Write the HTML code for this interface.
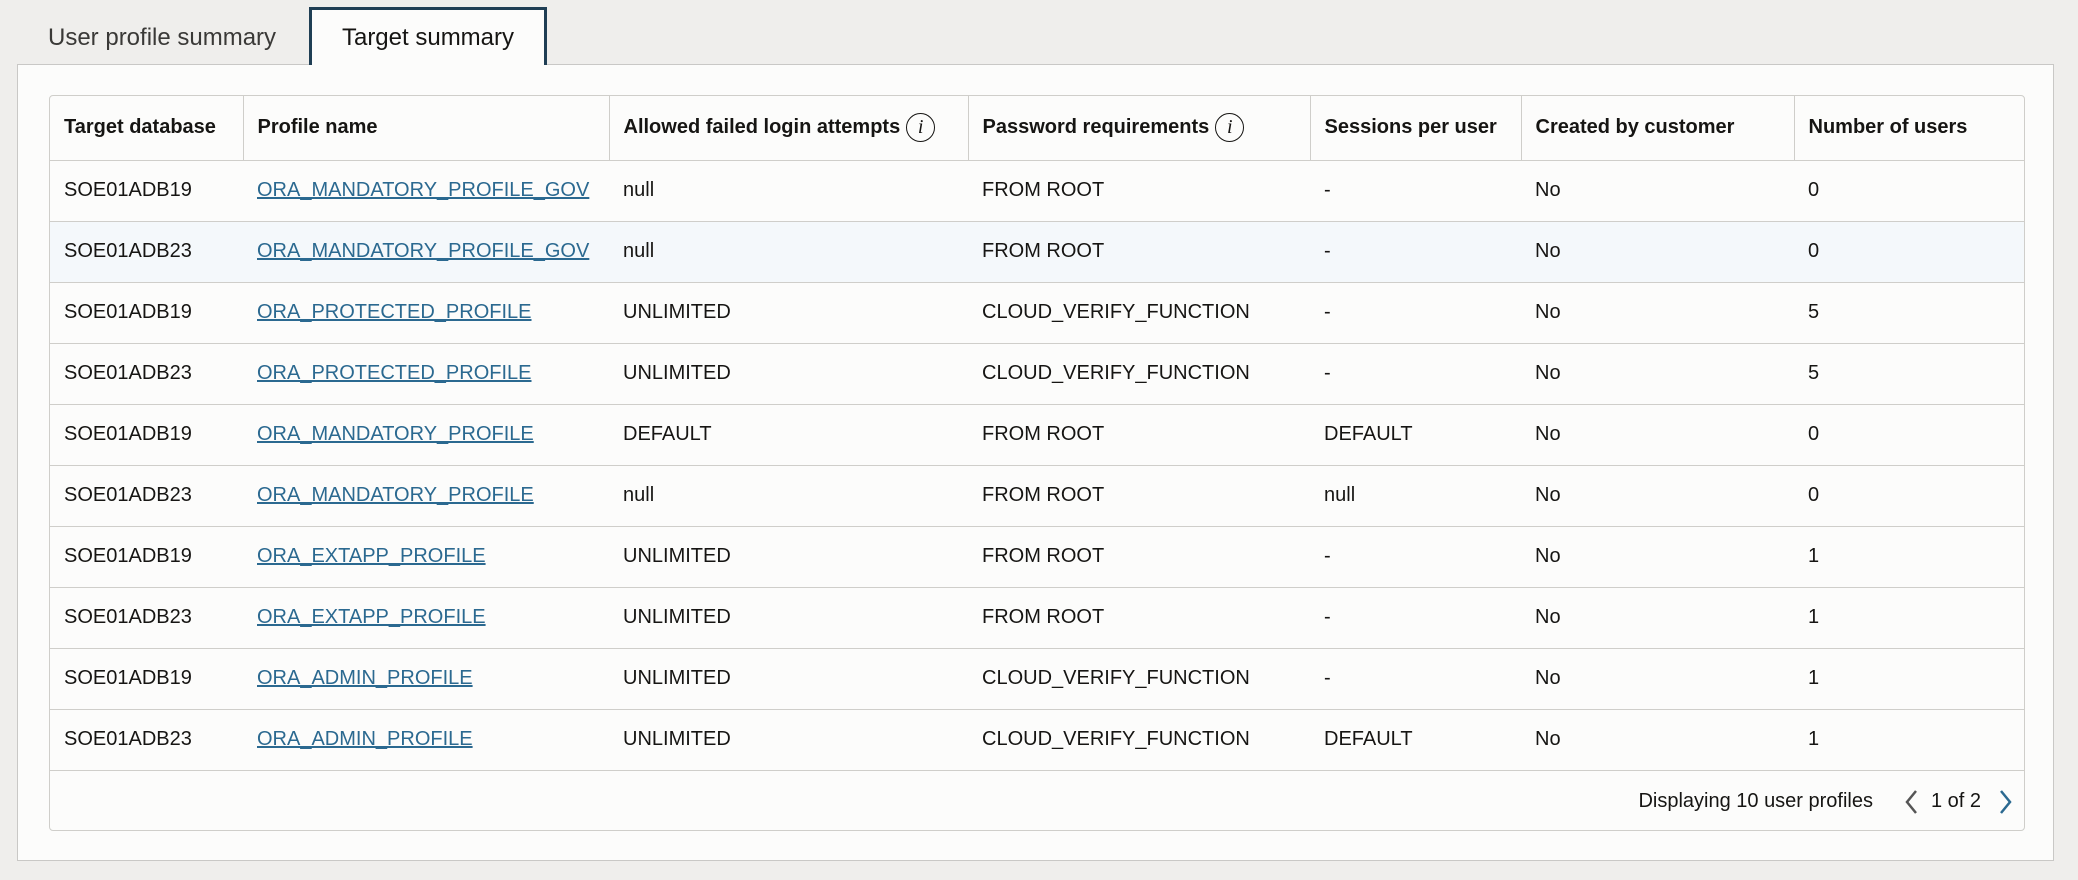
<!DOCTYPE html>
<html><head><meta charset="utf-8"><style>
*{box-sizing:border-box;margin:0;padding:0}
body{width:2078px;height:880px;background:#efeeec;font-family:"Liberation Sans",Arial,sans-serif;color:#161513;position:relative;overflow:hidden}
.tab1{position:absolute;left:48px;top:24px;font-size:24px;color:#3a3937}
.tab2{position:absolute;left:309px;top:7px;width:238px;height:58px;border:3px solid #1f3e54;border-bottom:none;background:#fcfcfb;font-size:24px;text-align:center;line-height:55px;z-index:2}
.panel{position:absolute;left:17px;top:64px;width:2037px;height:797px;background:#fcfcfb;border:1px solid #c9c8c6}
.tbl{position:absolute;left:49px;top:95px;width:1976px;height:736px;border:1px solid #cfceca;border-radius:4px;background:#fcfcfb;overflow:hidden}
table{border-collapse:collapse;width:1976px;table-layout:fixed;font-size:20px}
th{height:64px;text-align:left;font-weight:bold;padding:0 14px;border-bottom:1px solid #cfceca;border-left:1px solid #cfceca;white-space:nowrap}
th:first-child,td:first-child{border-left:none}
td{height:61px;padding:0 14px;border-bottom:1px solid #cfceca;white-space:nowrap}
tr.hl td{background:#f4f8fb}
a{color:#2b6990;text-decoration:underline}
.i{display:inline-block;width:29px;height:29px;border:1.6px solid #161513;border-radius:50%;text-align:center;line-height:26px;font-style:italic;font-family:"Liberation Serif",serif;font-size:20px;vertical-align:middle;margin-left:6px;font-weight:normal}
.foot{position:absolute;right:0;bottom:0;height:62px;width:100%;font-size:20px}
</style></head><body>
<div class="tab1">User profile summary</div>
<div class="tab2">Target summary</div>
<div class="panel"></div>
<div class="tbl">
<table>
<colgroup><col style="width:193px"><col style="width:366px"><col style="width:359px"><col style="width:342px"><col style="width:211px"><col style="width:273px"><col style="width:232px"></colgroup>
<tr><th>Target database</th><th>Profile name</th><th>Allowed failed login attempts<span class="i">i</span></th><th>Password requirements<span class="i">i</span></th><th>Sessions per user</th><th>Created by customer</th><th>Number of users</th></tr>
<tr><td>SOE01ADB19</td><td><a>ORA_MANDATORY_PROFILE_GOV</a></td><td>null</td><td>FROM ROOT</td><td>-</td><td>No</td><td>0</td></tr>
<tr class="hl"><td>SOE01ADB23</td><td><a>ORA_MANDATORY_PROFILE_GOV</a></td><td>null</td><td>FROM ROOT</td><td>-</td><td>No</td><td>0</td></tr>
<tr><td>SOE01ADB19</td><td><a>ORA_PROTECTED_PROFILE</a></td><td>UNLIMITED</td><td>CLOUD_VERIFY_FUNCTION</td><td>-</td><td>No</td><td>5</td></tr>
<tr><td>SOE01ADB23</td><td><a>ORA_PROTECTED_PROFILE</a></td><td>UNLIMITED</td><td>CLOUD_VERIFY_FUNCTION</td><td>-</td><td>No</td><td>5</td></tr>
<tr><td>SOE01ADB19</td><td><a>ORA_MANDATORY_PROFILE</a></td><td>DEFAULT</td><td>FROM ROOT</td><td>DEFAULT</td><td>No</td><td>0</td></tr>
<tr><td>SOE01ADB23</td><td><a>ORA_MANDATORY_PROFILE</a></td><td>null</td><td>FROM ROOT</td><td>null</td><td>No</td><td>0</td></tr>
<tr><td>SOE01ADB19</td><td><a>ORA_EXTAPP_PROFILE</a></td><td>UNLIMITED</td><td>FROM ROOT</td><td>-</td><td>No</td><td>1</td></tr>
<tr><td>SOE01ADB23</td><td><a>ORA_EXTAPP_PROFILE</a></td><td>UNLIMITED</td><td>FROM ROOT</td><td>-</td><td>No</td><td>1</td></tr>
<tr><td>SOE01ADB19</td><td><a>ORA_ADMIN_PROFILE</a></td><td>UNLIMITED</td><td>CLOUD_VERIFY_FUNCTION</td><td>-</td><td>No</td><td>1</td></tr>
<tr><td>SOE01ADB23</td><td><a>ORA_ADMIN_PROFILE</a></td><td>UNLIMITED</td><td>CLOUD_VERIFY_FUNCTION</td><td>DEFAULT</td><td>No</td><td>1</td></tr>
</table>
<div class="foot">
<span style="position:absolute;right:151px;top:22px">Displaying 10 user profiles</span>
<svg style="position:absolute;left:1853px;top:21px" width="18" height="26" viewBox="0 0 18 26"><path d="M13 2 L4 13 L13 24" fill="none" stroke="#555" stroke-width="2.5"/></svg>
<span style="position:absolute;left:1881px;top:22px">1 of 2</span>
<svg style="position:absolute;left:1946px;top:21px" width="18" height="26" viewBox="0 0 18 26"><path d="M5 2 L14 13 L5 24" fill="none" stroke="#2b6990" stroke-width="2.5"/></svg>
</div>
</div>
</body></html>
